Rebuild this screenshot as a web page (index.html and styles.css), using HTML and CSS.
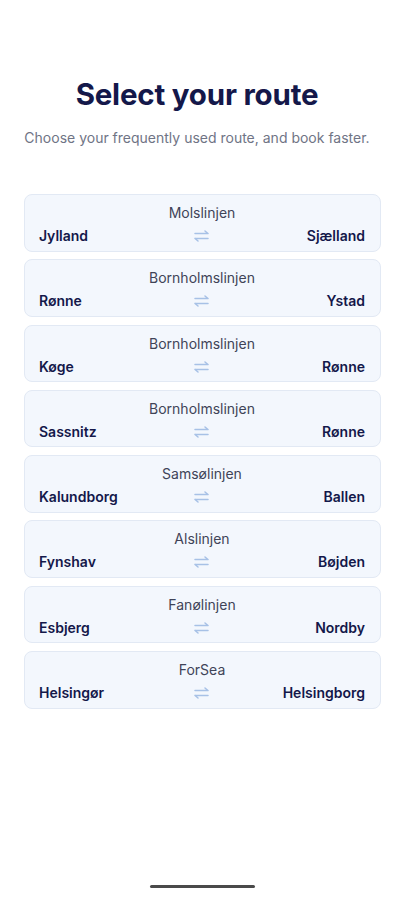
FILE: index.html
```html
<!DOCTYPE html>
<html>
<head>
  <title>Select your route</title>
  <link rel="stylesheet" href="styles.css">
</head>
<body>
  <div class="screen">
    <div class="header">
      <h1>Select your route</h1>
      <p class="subtitle">Choose your frequently used route, and book faster.</p>
    </div>

    <div class="routes">
      <div class="route">
        <div class="line">Molslinjen</div>
        <div class="ports"><span>Jylland</span><svg class="swap" viewBox="0 0 16 12"><path d="M1 3.5h13M11 1l3 2.5M1 8.5h13M4 11L1 8.5"/></svg><span>Sjælland</span></div>
      </div>
      <div class="route">
        <div class="line">Bornholmslinjen</div>
        <div class="ports"><span>Rønne</span><svg class="swap" viewBox="0 0 16 12"><path d="M1 3.5h13M11 1l3 2.5M1 8.5h13M4 11L1 8.5"/></svg><span>Ystad</span></div>
      </div>
      <div class="route">
        <div class="line">Bornholmslinjen</div>
        <div class="ports"><span>Køge</span><svg class="swap" viewBox="0 0 16 12"><path d="M1 3.5h13M11 1l3 2.5M1 8.5h13M4 11L1 8.5"/></svg><span>Rønne</span></div>
      </div>
      <div class="route">
        <div class="line">Bornholmslinjen</div>
        <div class="ports"><span>Sassnitz</span><svg class="swap" viewBox="0 0 16 12"><path d="M1 3.5h13M11 1l3 2.5M1 8.5h13M4 11L1 8.5"/></svg><span>Rønne</span></div>
      </div>
      <div class="route">
        <div class="line">Samsølinjen</div>
        <div class="ports"><span>Kalundborg</span><svg class="swap" viewBox="0 0 16 12"><path d="M1 3.5h13M11 1l3 2.5M1 8.5h13M4 11L1 8.5"/></svg><span>Ballen</span></div>
      </div>
      <div class="route">
        <div class="line">Alslinjen</div>
        <div class="ports"><span>Fynshav</span><svg class="swap" viewBox="0 0 16 12"><path d="M1 3.5h13M11 1l3 2.5M1 8.5h13M4 11L1 8.5"/></svg><span>Bøjden</span></div>
      </div>
      <div class="route">
        <div class="line">Fanølinjen</div>
        <div class="ports"><span>Esbjerg</span><svg class="swap" viewBox="0 0 16 12"><path d="M1 3.5h13M11 1l3 2.5M1 8.5h13M4 11L1 8.5"/></svg><span>Nordby</span></div>
      </div>
      <div class="route">
        <div class="line">ForSea</div>
        <div class="ports"><span>Helsingør</span><svg class="swap" viewBox="0 0 16 12"><path d="M1 3.5h13M11 1l3 2.5M1 8.5h13M4 11L1 8.5"/></svg><span>Helsingborg</span></div>
      </div>
    </div>

    <div class="home-bar"></div>
  </div>
</body>
</html>
```

FILE: styles.css
```css
body {
  font-family: 'Inter', 'Roboto', sans-serif;
  margin: 0;
  padding: 0;
  background: #ffffff;
  color: #14184a;
}

.screen {
  height: 900px;
  padding: 0 23px 0 24px;
  box-sizing: border-box;
  display: flex;
  flex-direction: column;
}

.header {
  margin-right: 11px;
  text-align: center;
}

h1 {
  margin: 74px 0 0 0;
  font-size: 29.5px;
  font-weight: 700;
  line-height: 40px;
  letter-spacing: -0.2px;
  color: #14184a;
}

.subtitle {
  margin: 15px 0 0 0;
  font-size: 14px;
  line-height: 18px;
  color: #6f7485;
  white-space: nowrap;
}

.routes {
  margin-top: 47px;
  display: flex;
  flex-direction: column;
  gap: 7.8px;
}

.route {
  height: 57.5px;
  box-sizing: border-box;
  background: #f3f7fd;
  border: 1px solid #e2e9f4;
  border-radius: 8px;
  padding: 9px 15px 0 14px;
}

.line {
  text-align: center;
  font-size: 14px;
  line-height: 18px;
  color: #3f4458;
}

.ports {
  display: flex;
  justify-content: space-between;
  align-items: center;
  margin-top: 5px;
  font-size: 14px;
  font-weight: 600;
  line-height: 18px;
  color: #14184a;
}

.ports span {
  flex: 1;
}

.ports span:last-child {
  text-align: right;
}

.swap {
  width: 16px;
  height: 12px;
  fill: none;
  stroke: #a7c1e6;
  stroke-width: 1.5;
  stroke-linecap: round;
  stroke-linejoin: round;
}

.home-bar {
  margin: auto auto 12px auto;
  width: 105px;
  height: 3px;
  border-radius: 2px;
  background: #4a4a4a;
}
```
